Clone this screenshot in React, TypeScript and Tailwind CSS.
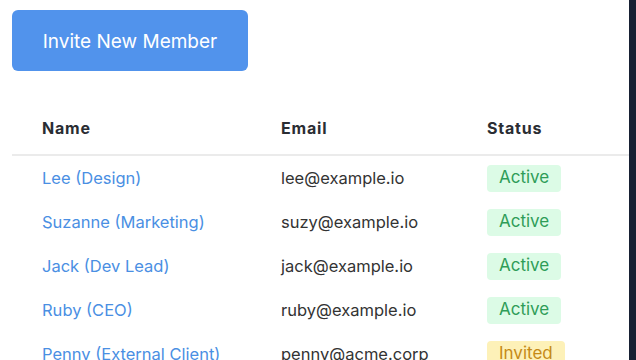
import React from "react";

type Member = {
  name: string;
  email: string;
  status: "Active" | "Invited";
};

const members: Member[] = [
  { name: "Lee (Design)", email: "lee@example.io", status: "Active" },
  { name: "Suzanne (Marketing)", email: "suzy@example.io", status: "Active" },
  { name: "Jack (Dev Lead)", email: "jack@example.io", status: "Active" },
  { name: "Ruby (CEO)", email: "ruby@example.io", status: "Active" },
  { name: "Penny (External Client)", email: "penny@acme.corp", status: "Invited" },
];

function StatusBadge({ status }: { status: Member["status"] }) {
  const styles =
    status === "Active"
      ? "bg-[#dcfbe6] text-[#2f9d58]"
      : "bg-[#fdf1b8] text-[#c58a16]";
  return (
    <span className={`inline-flex h-[27px] items-center rounded px-3 text-[17px] ${styles}`}>
      {status}
    </span>
  );
}

function App() {
  return (
    <div
      className="flex h-[360px] w-[636px] overflow-hidden bg-white"
      style={{ fontFamily: "Inter, 'Noto Sans', sans-serif" }}
    >
      <div className="flex-1 pl-3 pt-[10px]">
        <button className="h-[61px] w-[236px] rounded-md bg-[#5193ec] pt-[3px] text-[19px] text-white">
          Invite New Member
        </button>
        <div className="mt-[29px]">
          <div className="grid h-[56px] grid-cols-[239px_206px_1fr] items-center border-b-2 border-[#ebebeb] pt-[2px] text-[16px] font-bold tracking-wider text-[#2a2d33]">
            <div className="pl-[30px]">Name</div>
            <div className="pl-[30px]">Email</div>
            <div className="pl-[30px]">Status</div>
          </div>
          {members.map((m) => (
            <div
              key={m.email}
              className="grid h-[44px] grid-cols-[239px_206px_1fr] items-center text-[16.5px]"
            >
              <div className="pl-[30px] text-[#4a8fe3]">{m.name}</div>
              <div className="pl-[30px] text-[#333]">{m.email}</div>
              <div className="pl-[30px]">
                <StatusBadge status={m.status} />
              </div>
            </div>
          ))}
        </div>
      </div>
      <div className="w-[7px] bg-[#172033]" />
    </div>
  );
}

export default App;
